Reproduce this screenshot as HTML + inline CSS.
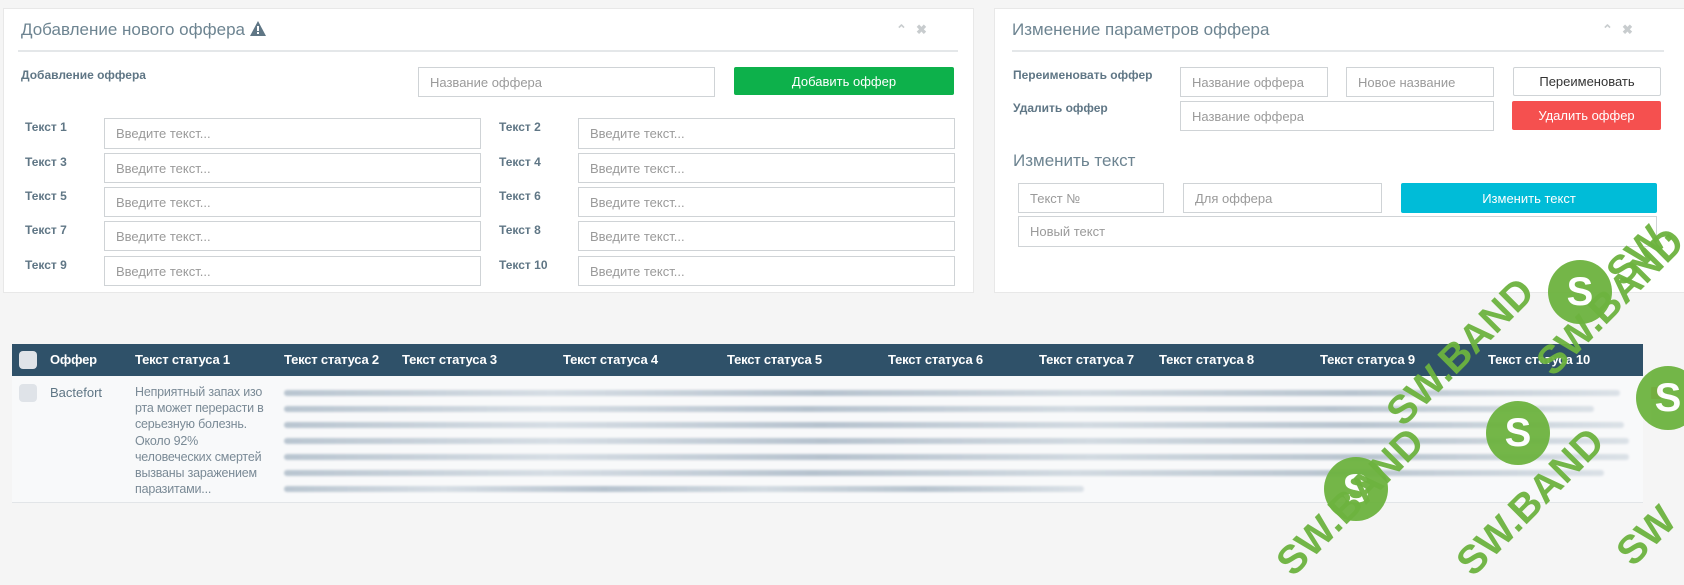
<!DOCTYPE html>
<html><head><meta charset="utf-8">
<style>
*{box-sizing:border-box;margin:0;padding:0}
body{width:1684px;height:508px;overflow:hidden;background:#f5f5f5;font-family:"Liberation Sans",Arial,sans-serif;position:relative}
.a{position:absolute}
.panel{position:absolute;background:#fff;border:1px solid #e8e8e8}
.title{position:absolute;font-size:17px;color:#6d8491}
.hr{position:absolute;height:2px;background:#e4e7e9}
.lbl{position:absolute;font-size:12px;font-weight:bold;color:#5f7685;line-height:14px}
.in{position:absolute;border:1px solid #cfd3d6;background:#fff;font-size:13px;color:#9a9a9a;padding-left:11px;display:flex;align-items:center}
.btn{position:absolute;font-size:13px;color:#fff;display:flex;align-items:center;justify-content:center;border-radius:2px}
.ic{position:absolute;color:#c8ccce;font-size:13px;font-weight:bold}
.th{position:absolute;top:352px;font-size:13px;font-weight:bold;color:#fff;letter-spacing:-0.2px}
.blur{position:absolute;left:284px;height:6px;border-radius:3px;background:linear-gradient(90deg,#b9c5d0,#d6dde4 20%,#b6c2ce 40%,#d2dae1 60%,#b8c4cf 80%,#dbe1e7);filter:blur(1px)}
.wm{position:absolute;border-radius:50%;background:#6db33f;opacity:.95}
.wm::after{content:"S";position:absolute;left:0;right:0;top:0;bottom:0;display:flex;align-items:center;justify-content:center;color:#fff;font-weight:bold;font-size:40px}
.wt{position:absolute;color:#6db33f;font-weight:bold;font-size:40px;transform:rotate(-45deg);transform-origin:left bottom;white-space:nowrap;opacity:.95}
</style></head><body>

<div class="panel" style="left:3px;top:8px;width:971px;height:285px"></div>
<div class="title" style="left:21px;top:20px">Добавление нового оффера <svg width="16" height="15" viewBox="0 0 16 15" style="vertical-align:-1px"><path d="M8 0 L16 15 L0 15Z" fill="#5f7685"/><rect x="7" y="5" width="2" height="5" fill="#fff"/><rect x="7" y="11" width="2" height="2" fill="#fff"/></svg></div>
<div class="ic" style="left:896px;top:22px">&#8963;</div><div class="ic" style="left:916px;top:22px">&#10006;</div>
<div class="hr" style="left:18px;top:50px;width:940px"></div>
<div class="lbl" style="left:21px;top:68px">Добавление оффера</div>
<div class="in" style="left:418px;top:67px;width:297px;height:30px">Название оффера</div>
<div class="btn" style="left:734px;top:67px;width:220px;height:28px;background:#0db14b">Добавить оффер</div>

<div class="lbl" style="left:25px;top:120px">Текст 1</div><div class="in" style="left:104px;top:118px;width:377px;height:31px">Введите текст...</div>
<div class="lbl" style="left:499px;top:120px">Текст 2</div><div class="in" style="left:578px;top:118px;width:377px;height:31px">Введите текст...</div>
<div class="lbl" style="left:25px;top:155px">Текст 3</div><div class="in" style="left:104px;top:153px;width:377px;height:30px">Введите текст...</div>
<div class="lbl" style="left:499px;top:155px">Текст 4</div><div class="in" style="left:578px;top:153px;width:377px;height:30px">Введите текст...</div>
<div class="lbl" style="left:25px;top:189px">Текст 5</div><div class="in" style="left:104px;top:187px;width:377px;height:30px">Введите текст...</div>
<div class="lbl" style="left:499px;top:189px">Текст 6</div><div class="in" style="left:578px;top:187px;width:377px;height:30px">Введите текст...</div>
<div class="lbl" style="left:25px;top:223px">Текст 7</div><div class="in" style="left:104px;top:221px;width:377px;height:30px">Введите текст...</div>
<div class="lbl" style="left:499px;top:223px">Текст 8</div><div class="in" style="left:578px;top:221px;width:377px;height:30px">Введите текст...</div>
<div class="lbl" style="left:25px;top:258px">Текст 9</div><div class="in" style="left:104px;top:256px;width:377px;height:30px">Введите текст...</div>
<div class="lbl" style="left:499px;top:258px">Текст 10</div><div class="in" style="left:578px;top:256px;width:377px;height:30px">Введите текст...</div>

<div class="panel" style="left:994px;top:8px;width:700px;height:285px"></div>
<div class="title" style="left:1012px;top:20px">Изменение параметров оффера</div>
<div class="ic" style="left:1602px;top:22px">&#8963;</div><div class="ic" style="left:1622px;top:22px">&#10006;</div>
<div class="hr" style="left:1012px;top:50px;width:652px"></div>
<div class="lbl" style="left:1013px;top:68px">Переименовать оффер</div>
<div class="lbl" style="left:1013px;top:101px">Удалить оффер</div>
<div class="in" style="left:1180px;top:67px;width:148px;height:30px">Название оффера</div>
<div class="in" style="left:1346px;top:67px;width:148px;height:30px">Новое название</div>
<div class="btn" style="left:1513px;top:67px;width:148px;height:29px;background:#fff;border:1px solid #cfd3d6;color:#333">Переименовать</div>
<div class="in" style="left:1180px;top:101px;width:314px;height:30px">Название оффера</div>
<div class="btn" style="left:1512px;top:101px;width:149px;height:29px;background:#f5504f">Удалить оффер</div>
<div class="title" style="left:1013px;top:151px">Изменить текст</div>
<div class="in" style="left:1018px;top:183px;width:146px;height:30px">Текст №</div>
<div class="in" style="left:1183px;top:183px;width:199px;height:30px">Для оффера</div>
<div class="btn" style="left:1401px;top:183px;width:256px;height:30px;background:#00bcd8">Изменить текст</div>
<div class="in" style="left:1018px;top:216px;width:639px;height:31px">Новый текст</div>

<div class="a" style="left:12px;top:344px;width:1631px;height:32px;background:#2f5169"></div>
<div class="a" style="left:19px;top:351px;width:18px;height:18px;border-radius:4px;background:#dfe3e8"></div>
<div class="th" style="left:50px">Оффер</div>
<div class="th" style="left:135px">Текст статуса 1</div>
<div class="th" style="left:284px">Текст статуса 2</div>
<div class="th" style="left:402px">Текст статуса 3</div>
<div class="th" style="left:563px">Текст статуса 4</div>
<div class="th" style="left:727px">Текст статуса 5</div>
<div class="th" style="left:888px">Текст статуса 6</div>
<div class="th" style="left:1039px">Текст статуса 7</div>
<div class="th" style="left:1159px">Текст статуса 8</div>
<div class="th" style="left:1320px">Текст статуса 9</div>
<div class="th" style="left:1488px">Текст статуса 10</div>

<div class="a" style="left:12px;top:376px;width:1631px;height:127px;background:#f8f9fa;border-bottom:1px solid #e2e5e8"></div>
<div class="a" style="left:19px;top:384px;width:18px;height:18px;border-radius:4px;background:#dfe3e8"></div>
<div class="a" style="left:50px;top:385px;font-size:13px;color:#5f7685">Bactefort</div>
<div class="a" style="left:135px;top:384px;width:132px;font-size:12.5px;line-height:16.2px;color:#7a8a96;letter-spacing:-0.2px">Неприятный запах изо рта может перерасти в серьезную болезнь. Около 92% человеческих смертей вызваны заражением паразитами...</div>
<div class="blur" style="top:390px;width:1336px"></div>
<div class="blur" style="top:406px;width:1310px"></div>
<div class="blur" style="top:422px;width:1340px"></div>
<div class="blur" style="top:438px;width:1345px"></div>
<div class="blur" style="top:454px;width:1345px"></div>
<div class="blur" style="top:470px;width:1320px"></div>
<div class="blur" style="top:486px;width:800px"></div>
<div class="a" style="left:1651px;top:387px;width:10px;height:12px;background:#e84a4a;border-radius:1px"></div>

<div class="wm" style="left:1548px;top:260px;width:64px;height:64px"></div>
<div class="wm" style="left:1486px;top:401px;width:64px;height:64px"></div>
<div class="wm" style="left:1636px;top:366px;width:64px;height:64px"></div>
<div class="wm" style="left:1324px;top:457px;width:64px;height:64px"></div>
<div class="wt" style="left:1410px;top:390px">SW.BAND</div>
<div class="wt" style="left:1560px;top:340px">SW.BAND</div>
<div class="wt" style="left:1300px;top:540px">SW.BAND</div>
<div class="wt" style="left:1480px;top:540px">SW.BAND</div>
<div class="wt" style="left:1630px;top:250px">SW.</div>
<div class="wt" style="left:1640px;top:530px">SW</div>
</body></html>
